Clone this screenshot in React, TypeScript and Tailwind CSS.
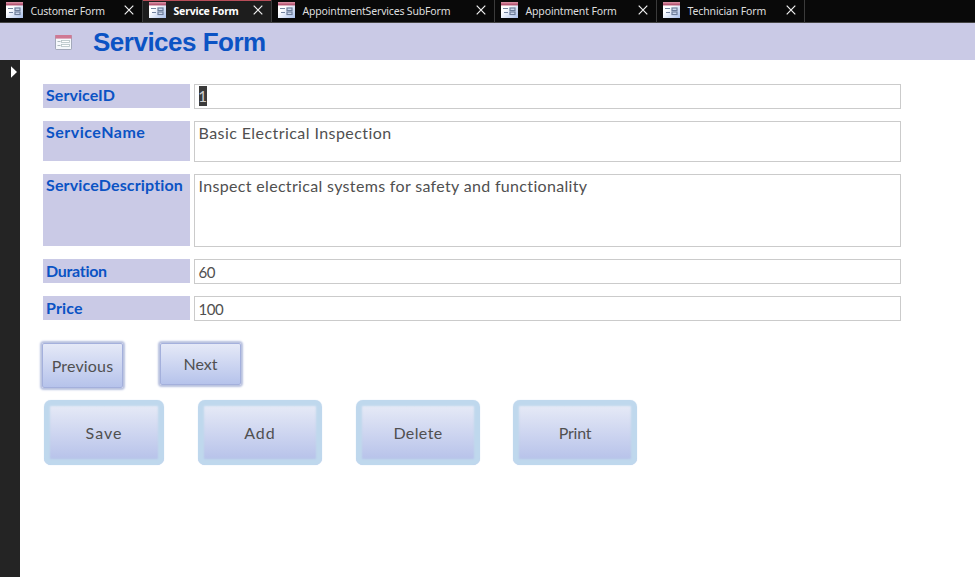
type Tab = { label: string; width: string; text: string; active?: boolean };

const tabs: Tab[] = [
  { label: 'Customer Form', width: 'w-[143px]', text: 'tracking-[-0.2px]' },
  { label: 'Service Form', width: 'w-[129px]', text: 'tracking-[-0.2px]', active: true },
  { label: 'AppointmentServices SubForm', width: 'w-[223px]', text: 'tracking-[-0.17px]' },
  { label: 'Appointment Form', width: 'w-[162px]', text: 'tracking-[-0.15px]' },
  { label: 'Technician Form', width: 'w-[148px]', text: 'tracking-[-0.12px]' },
];

const rows = [
  { label: 'ServiceID', value: '1', labelHeight: 'h-6', height: 'h-[25px]', gap: 'mb-3', labelText: 'leading-[22px] tracking-[0.05px]', text: 'text-[15px] leading-[22px]', selected: true },
  { label: 'ServiceName', value: 'Basic Electrical Inspection', labelHeight: 'h-10', height: 'h-[41px]', gap: 'mb-3', labelText: 'leading-[22px] tracking-[0.5px]', text: 'text-base leading-[22px] tracking-[0.43px]' },
  { label: 'ServiceDescription', value: 'Inspect electrical systems for safety and functionality', labelHeight: 'h-[72px]', height: 'h-[73px]', gap: 'mb-3', labelText: 'leading-[22px] tracking-[0.15px]', text: 'text-base leading-[22px] tracking-[0.33px]' },
  { label: 'Duration', value: '60', labelHeight: 'h-6', height: 'h-[25px]', gap: 'mb-3', labelText: 'leading-[23px] tracking-[-0.3px]', text: 'text-[15px] leading-6 tracking-[-0.4px]' },
  { label: 'Price', value: '100', labelHeight: 'h-6', height: 'h-[25px]', gap: '', labelText: 'leading-[23px] tracking-[0.15px]', text: 'text-[15px] leading-6 tracking-[-0.4px]' },
];

const actions = [
  { label: 'Save', width: 'w-[120px]', margin: '', text: 'tracking-[1px]' },
  { label: 'Add', width: 'w-[124px]', margin: 'ml-[34px]', text: 'tracking-[1px]' },
  { label: 'Delete', width: 'w-[124px]', margin: 'ml-[34px]', text: 'tracking-[0.4px]' },
  { label: 'Print', width: 'w-[124px]', margin: 'ml-[33px]', text: 'tracking-[-0.2px]' },
];

function FormIcon() {
  return (
    <svg width="17" height="16" viewBox="0 0 17 16" className="shrink-0">
      <defs>
        <linearGradient id="page" x1="0" y1="0" x2="1" y2="1">
          <stop offset="0.35" stopColor="#ffffff" />
          <stop offset="1" stopColor="#a9bfe9" />
        </linearGradient>
        <linearGradient id="bar" x1="0" y1="0" x2="0" y2="1">
          <stop offset="0" stopColor="#df9aac" />
          <stop offset="1" stopColor="#a83f60" />
        </linearGradient>
      </defs>
      <rect x="0" y="0" width="17" height="16" fill="url(#page)" />
      <rect x="0" y="0" width="17" height="3.4" fill="url(#bar)" />
      <path d="M2 6.5h5M3 10.5h4" stroke="#73839f" />
      <rect x="9" y="6" width="5" height="2.5" fill="#d7e2f5" stroke="#6c7c99" strokeWidth="1.2" />
      <rect x="9" y="10" width="5" height="2.5" fill="#d7e2f5" stroke="#6c7c99" strokeWidth="1.2" />
    </svg>
  );
}

function HeaderIcon() {
  return (
    <svg width="17" height="15" viewBox="0 0 17 15" className="shrink-0">
      <rect x="0.5" y="0.5" width="16" height="14" rx="0.6" fill="#f5f8fb" stroke="#a3a9ba" />
      <rect x="0.3" y="0" width="16.4" height="3.6" fill="#cf7893" />
      <path d="M2.5 6.5h3M2.5 10.5h3" stroke="#adb9bd" />
      <rect x="6.5" y="5.5" width="8" height="2" fill="#fff" stroke="#b4c1c4" strokeWidth="0.8" />
      <rect x="6.5" y="9.5" width="8" height="2" fill="#fff" stroke="#b4c1c4" strokeWidth="0.8" />
    </svg>
  );
}

function TabItem({ tab }: { tab: Tab }) {
  return (
    <div
      className={`${tab.width} flex h-[23px] shrink-0 items-start border-r border-b border-r-[#3b3b3b] border-b-[#444] pl-[6px] ${
        tab.active ? 'bg-[#1d1d1d] font-bold text-white shadow-[inset_0_1px_0_#b84e59]' : 'bg-[#090909] text-[#dedede]'
      }`}
    >
      <div className="pt-[2px]">
        <FormIcon />
      </div>
      <span className={`${tab.text} ml-[7.5px] pt-[3px] text-[10.5px] leading-4 whitespace-nowrap`}>{tab.label}</span>
      <svg width="10" height="10" viewBox="0 0 10 10" className="mt-[5px] mr-2 ml-auto shrink-0">
        <path d="M0.7 0.7L9.3 9.3M9.3 0.7L0.7 9.3" stroke="#f2f2f2" strokeWidth="1.2" />
      </svg>
    </div>
  );
}

export default function App() {
  return (
    <div className="flex h-[577px] w-[975px] flex-col overflow-hidden bg-white font-['Lato','Open_Sans',sans-serif]">
      <nav className="flex h-[23px] shrink-0 border-b border-[#444] bg-[#090909] font-['Noto_Sans',sans-serif]">
        {tabs.map((tab) => (
          <TabItem key={tab.label} tab={tab} />
        ))}
      </nav>
      <header className="flex h-[37px] shrink-0 items-start bg-[#cacae6] pl-[55px]">
        <div className="pt-3">
          <HeaderIcon />
        </div>
        <h1 className="ml-[21px] pt-1 font-['Liberation_Sans',sans-serif] text-[26px] leading-[30px] font-bold tracking-[-0.5px] whitespace-nowrap text-[#0b53c4]">
          Services Form
        </h1>
      </header>
      <div className="flex min-h-0 flex-1">
        <aside className="flex w-5 shrink-0 items-start bg-[#242424] pt-[6px] pl-[11px]">
          <svg width="6" height="12" viewBox="0 0 6 12">
            <path d="M0 0.3L6 6L0 11.7Z" fill="#fff" />
          </svg>
        </aside>
        <main className="flex-1 pt-6 pl-[23px]">
          {rows.map((row) => (
            <div key={row.label} className={`${row.gap} flex items-start gap-1`}>
              <div className={`text-base ${row.labelHeight} ${row.labelText} w-[147px] bg-[#cacae6] pl-[3px] font-bold whitespace-nowrap text-[#0b53c4]`}>
                {row.label}
              </div>
              <div className={`${row.height} ${row.text} w-[707px] border border-[#cbcbcb] pl-[3.5px] whitespace-nowrap text-[#505050]`}>
                {row.selected ? (
                  <span className="mt-px flex h-5 w-2 items-center justify-center bg-[#3b3b3b] text-[#d0d0d0]">{row.value}</span>
                ) : (
                  row.value
                )}
              </div>
            </div>
          ))}
          <div className="mt-[22px] -ml-px flex items-start gap-[36px] text-base text-[#505050]">
            <button className="flex h-[45px] w-[81px] items-center justify-center rounded-[2px] border-[1.5px] border-[#a4b0dc] bg-linear-to-b from-[#e5e9f7] to-[#b6c3eb] pt-px tracking-[0.15px] shadow-[0_0_2px_2px_#b8c1df]">
              Previous
            </button>
            <button className="ml-px flex h-[42px] w-[81px] items-center justify-center rounded-[2px] border-[1.5px] border-[#a4b0dc] bg-linear-to-b from-[#e5e9f7] to-[#b6c3eb] shadow-[0_0_2px_2px_#b8c1df]">
              Next
            </button>
          </div>
          <div className="mt-[12px] ml-px flex text-base text-[#505050]">
            {actions.map((action) => (
              <button
                key={action.label}
                className={`${action.width} ${action.margin} ${action.text} flex h-[65px] shrink-0 items-center justify-center rounded-[7px] bg-linear-to-b from-[#e5e9f6] from-10% to-[#b8c3ea] to-90% pt-px shadow-[inset_0_0_2px_6px_#bfd8ed,0_0_1px_#bfd8ed]`}
              >
                {action.label}
              </button>
            ))}
          </div>
        </main>
      </div>
    </div>
  );
}
